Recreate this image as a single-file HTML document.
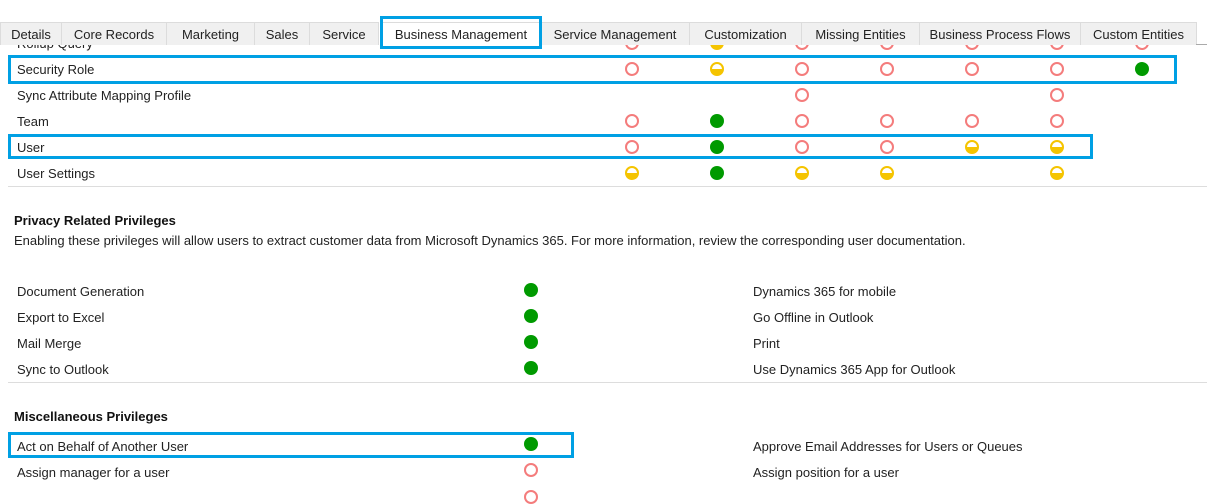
<!DOCTYPE html>
<html><head><meta charset="utf-8"><style>
body{margin:0;width:1207px;height:500px;overflow:hidden;background:#fff;position:relative;font-family:"Segoe UI","Liberation Sans",sans-serif;font-size:13px;color:#222}
.t{position:absolute;white-space:nowrap;line-height:16px;margin-top:1px}
.b{font-weight:bold;color:#111}
.i{position:absolute;width:14px;height:14px;border-radius:50%;box-sizing:border-box}
.e{border:2px solid #f47c7c;background:#fff}
.f{background:#009a00}
.h{border:2px solid #f5c400;background:linear-gradient(#fff 50%,#f5c400 50%)}
.sep{position:absolute;left:8px;right:0;height:1px;background:#ddd}
.box{position:absolute;border:3px solid #00a0e4;box-sizing:border-box}
.tabs{position:absolute;left:0;top:0;width:1207px;height:45px;background:#fff}
.tab{position:absolute;top:22px;height:23px;background:#f0f0f0;border:1px solid #dcdcdc;border-bottom:none;box-sizing:border-box;text-align:center;line-height:23px;font-size:13px;color:#222}
</style></head><body>

<div class="t" style="left:17px;top:35px">Rollup Query</div>
<div class="i e" style="left:625px;top:36px"></div><div class="i h" style="left:710px;top:36px"></div><div class="i e" style="left:795px;top:36px"></div><div class="i e" style="left:880px;top:36px"></div><div class="i e" style="left:965px;top:36px"></div><div class="i e" style="left:1050px;top:36px"></div><div class="i e" style="left:1135px;top:36px"></div>

<div class="tabs">
<div class="tab" style="left:0;width:62px">Details</div>
<div class="tab" style="left:61px;width:106px">Core Records</div>
<div class="tab" style="left:166px;width:89px">Marketing</div>
<div class="tab" style="left:254px;width:56px">Sales</div>
<div class="tab" style="left:309px;width:70px">Service</div>
<div class="tab" style="left:381px;width:160px;background:#fff">Business Management</div>
<div class="tab" style="left:540px;width:150px">Service Management</div>
<div class="tab" style="left:689px;width:113px">Customization</div>
<div class="tab" style="left:801px;width:119px">Missing Entities</div>
<div class="tab" style="left:919px;width:162px">Business Process Flows</div>
<div class="tab" style="left:1080px;width:117px">Custom Entities</div>
<div style="position:absolute;left:1196px;top:44px;width:11px;height:1px;background:#aaa"></div>
</div>
<div class="box" style="left:380px;top:16px;width:162px;height:33px"></div>

<div class="t" style="left:17px;top:61px">Security Role</div>
<div class="i e" style="left:625px;top:62px"></div><div class="i h" style="left:710px;top:62px"></div><div class="i e" style="left:795px;top:62px"></div><div class="i e" style="left:880px;top:62px"></div><div class="i e" style="left:965px;top:62px"></div><div class="i e" style="left:1050px;top:62px"></div><div class="i f" style="left:1135px;top:62px"></div>
<div class="box" style="left:8px;top:55px;width:1169px;height:29px"></div>

<div class="t" style="left:17px;top:87px">Sync Attribute Mapping Profile</div>
<div class="i e" style="left:795px;top:88px"></div><div class="i e" style="left:1050px;top:88px"></div>

<div class="t" style="left:17px;top:113px">Team</div>
<div class="i e" style="left:625px;top:114px"></div><div class="i f" style="left:710px;top:114px"></div><div class="i e" style="left:795px;top:114px"></div><div class="i e" style="left:880px;top:114px"></div><div class="i e" style="left:965px;top:114px"></div><div class="i e" style="left:1050px;top:114px"></div>

<div class="t" style="left:17px;top:139px">User</div>
<div class="i e" style="left:625px;top:140px"></div><div class="i f" style="left:710px;top:140px"></div><div class="i e" style="left:795px;top:140px"></div><div class="i e" style="left:880px;top:140px"></div><div class="i h" style="left:965px;top:140px"></div><div class="i h" style="left:1050px;top:140px"></div>
<div class="box" style="left:8px;top:134px;width:1085px;height:25px"></div>

<div class="t" style="left:17px;top:165px">User Settings</div>
<div class="i h" style="left:625px;top:166px"></div><div class="i f" style="left:710px;top:166px"></div><div class="i h" style="left:795px;top:166px"></div><div class="i h" style="left:880px;top:166px"></div><div class="i h" style="left:1050px;top:166px"></div>
<div class="sep" style="top:186px"></div>

<div class="t b" style="left:14px;top:212px">Privacy Related Privileges</div>
<div class="t" style="left:14px;top:232px">Enabling these privileges will allow users to extract customer data from Microsoft Dynamics 365. For more information, review the corresponding user documentation.</div>

<div class="t" style="left:17px;top:283px">Document Generation</div><div class="i f" style="left:524px;top:283px"></div><div class="t" style="left:753px;top:283px">Dynamics 365 for mobile</div>
<div class="t" style="left:17px;top:309px">Export to Excel</div><div class="i f" style="left:524px;top:309px"></div><div class="t" style="left:753px;top:309px">Go Offline in Outlook</div>
<div class="t" style="left:17px;top:335px">Mail Merge</div><div class="i f" style="left:524px;top:335px"></div><div class="t" style="left:753px;top:335px">Print</div>
<div class="t" style="left:17px;top:361px">Sync to Outlook</div><div class="i f" style="left:524px;top:361px"></div><div class="t" style="left:753px;top:361px">Use Dynamics 365 App for Outlook</div>
<div class="sep" style="top:382px"></div>

<div class="t b" style="left:14px;top:408px">Miscellaneous Privileges</div>
<div class="t" style="left:17px;top:438px">Act on Behalf of Another User</div><div class="i f" style="left:524px;top:437px"></div><div class="t" style="left:753px;top:438px">Approve Email Addresses for Users or Queues</div>
<div class="box" style="left:8px;top:432px;width:566px;height:26px"></div>
<div class="t" style="left:17px;top:464px">Assign manager for a user</div><div class="i e" style="left:524px;top:463px"></div><div class="t" style="left:753px;top:464px">Assign position for a user</div>
<div class="i e" style="left:524px;top:490px"></div>
</body></html>
